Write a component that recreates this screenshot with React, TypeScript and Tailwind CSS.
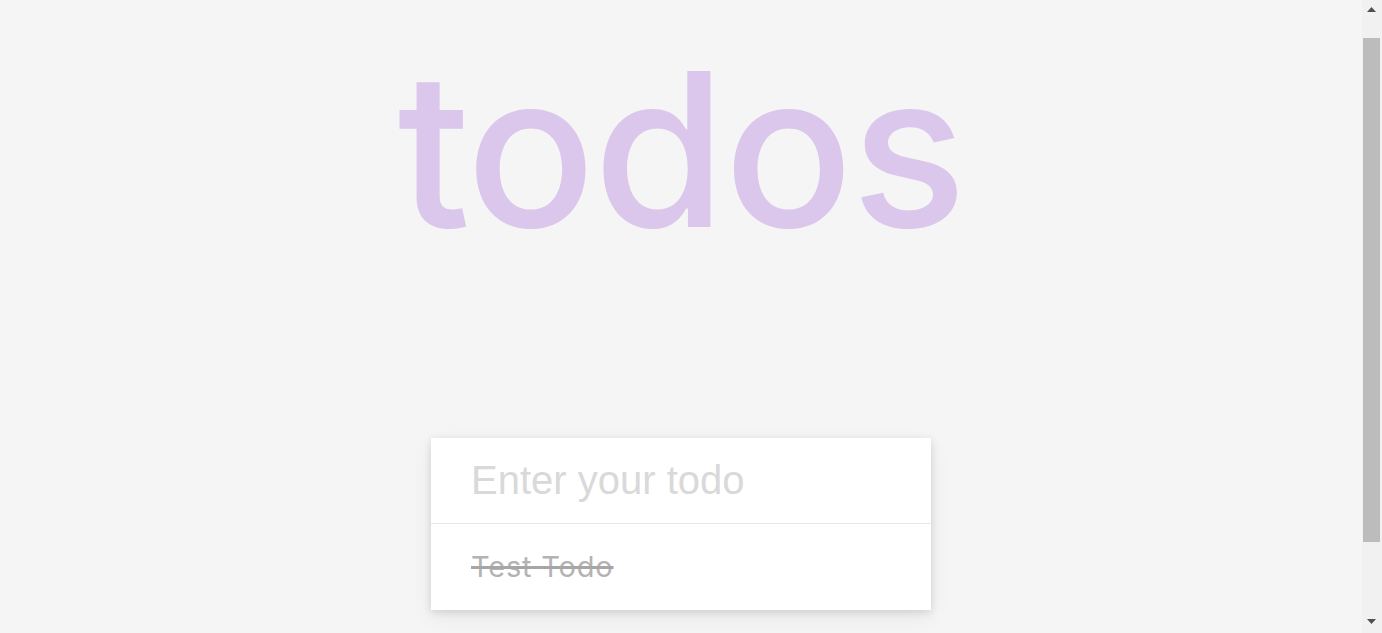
import React from "react";

function FakeScrollbar() {
  return (
    <div className="fixed top-0 right-0 h-screen w-[20px] bg-[#f1f1f1] flex flex-col items-start">
      <svg width="9" height="5" viewBox="0 0 9 5" className="mt-[7px] ml-[5px]">
        <polygon points="0,5 9,5 4.5,0" fill="#505050" />
      </svg>
      <div className="mt-[26px] ml-[1px] w-[17px] h-[504px] bg-[#bcbcbc]" />
      <div className="flex-1" />
      <svg width="9" height="5" viewBox="0 0 9 5" className="mb-[9px] ml-[5px]">
        <polygon points="0,0 9,0 4.5,5" fill="#505050" />
      </svg>
    </div>
  );
}

export default function App() {
  return (
    <div className="min-h-screen bg-[#f5f5f5] pr-[20px]">
      <div className="flex flex-col items-center pt-[43px]">
        <h1
          className="text-[214px] leading-none font-medium text-[#dbc6ec] tracking-[-2px]"
          style={{ fontFamily: "Inter, 'Noto Sans', sans-serif" }}
        >
          todos
        </h1>
        <div className="mt-[181px] w-[500px] bg-white shadow-[0_2px_8px_rgba(0,0,0,0.12),0_8px_20px_rgba(0,0,0,0.06)]">
          <div className="h-[86px] flex items-center border-b border-[#e6e6e6]">
            <input
              className="w-full h-full pl-[40px] pr-4 text-[40px] outline-none bg-transparent placeholder:text-[#d9d9d9] text-[#4d4d4d]"
              style={{ fontFamily: "'Liberation Sans', Arial, sans-serif" }}
              placeholder="Enter your todo"
            />
          </div>
          <div className="h-[86px] flex items-center pl-[40px]">
            <span
              className="text-[29px] tracking-[0.8px] line-through text-[#b3b3b3] decoration-[#a6a6a6] decoration-[3px]"
              style={{ fontFamily: "Inter, 'Noto Sans', sans-serif" }}
            >
              Test Todo
            </span>
          </div>
        </div>
      </div>
      <FakeScrollbar />
    </div>
  );
}
